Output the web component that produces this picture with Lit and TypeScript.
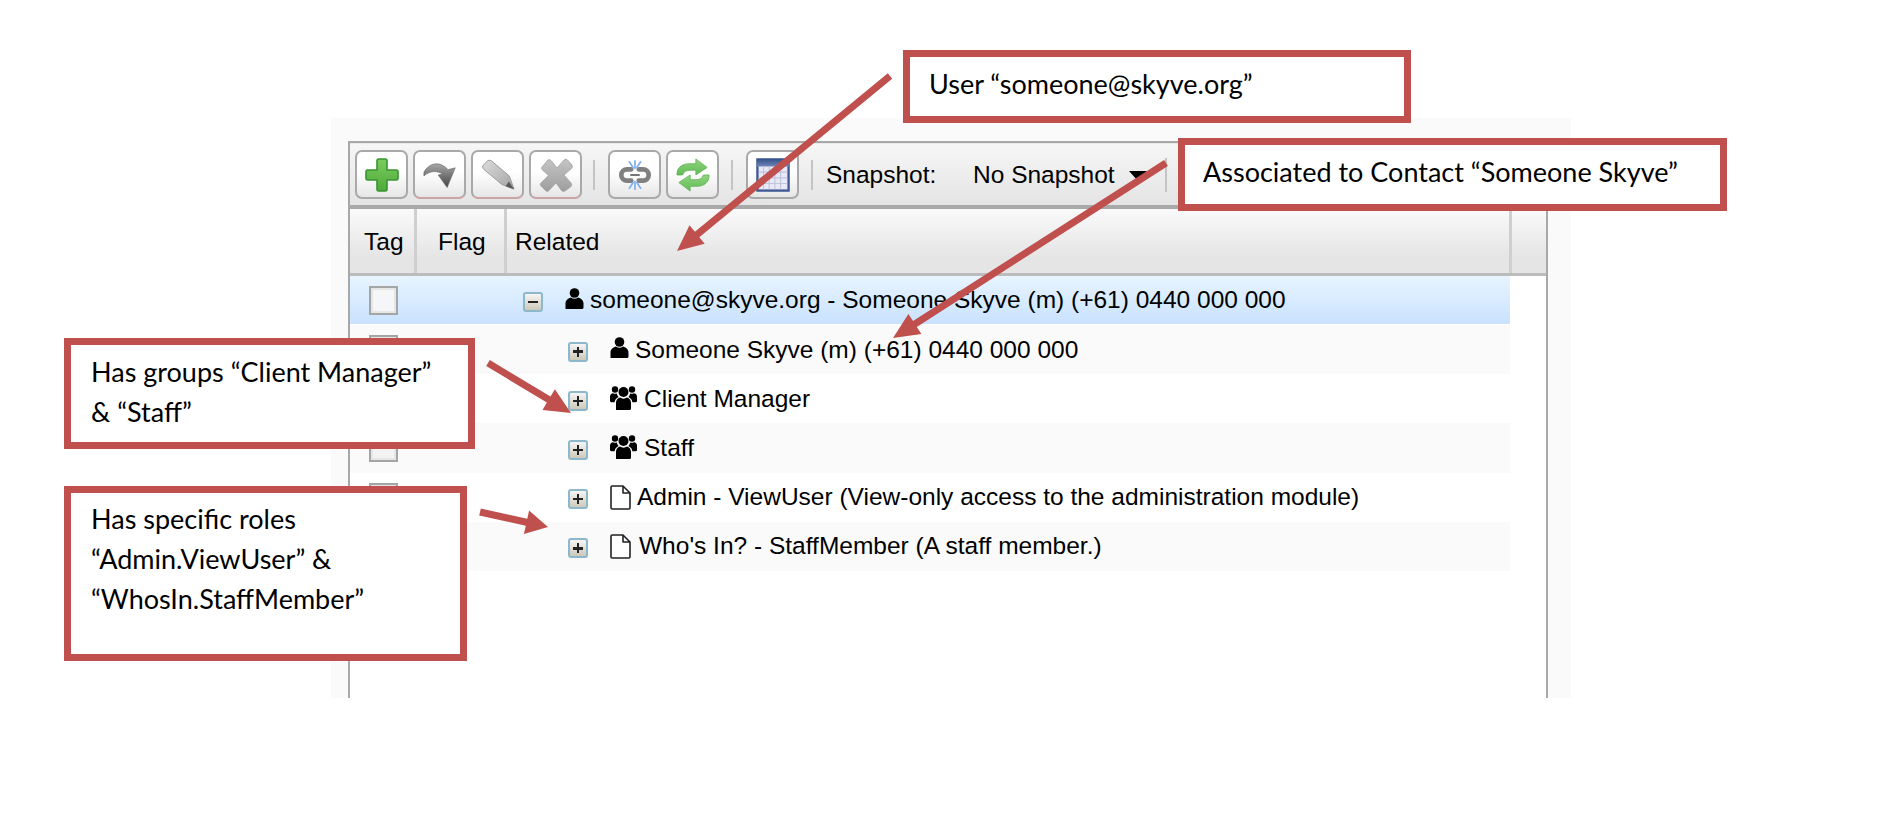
import { LitElement, html, css, svg } from "lit";
import { customElement } from "lit/decorators.js";

type Row = { kind: "user" | "group" | "doc"; text: string; cls: string; open?: boolean };

const rows: Row[] = [
  { kind: "user", text: "someone@skyve.org - Someone Skyve (m) (+61) 0440 000 000", cls: "sel top", open: true },
  { kind: "user", text: "Someone Skyve (m) (+61) 0440 000 000", cls: "alt" },
  { kind: "group", text: "Client Manager", cls: "" },
  { kind: "group", text: "Staff", cls: "alt" },
  { kind: "doc", text: "Admin - ViewUser (View-only access to the administration module)", cls: "" },
  { kind: "doc", text: "Who's In? - StaffMember (A staff member.)", cls: "alt who" },
];

const userIcon = html`<svg class="ic user" viewBox="0 0 19 21"><circle cx="9.5" cy="5" r="4.8" fill="#000"/><path d="M0.5 21V15.5C0.5 12 3.5 10 6 9.5C8 11.2 11 11.2 13 9.5C15.5 10 18.5 12 18.5 15.5V19.5C18.5 20.5 17.5 21 16.5 21Z" fill="#000"/></svg>`;
const groupIcon = html`<svg class="ic group" viewBox="0 0 27 24"><g fill="#000"><circle cx="13.5" cy="6" r="5"/><path d="M6 24V17C6 13.5 8.5 11.8 10 11.5C12 13 15 13 17 11.5C18.5 11.8 21 13.5 21 17V22.5C21 23.5 20 24 19 24Z"/><circle cx="5" cy="3.5" r="3.2"/><circle cx="22" cy="3.5" r="3.2"/><path d="M0 15V10.5C0 8.5 1.5 7.5 3 7.2C4.2 8 5.5 8 7 7.6C7 9 7.8 10.3 8.6 11C6.5 12 4.8 13.8 4.6 16.2H1.5C0.6 16.2 0 15.8 0 15Z"/><path d="M27 15V10.5C27 8.5 25.5 7.5 24 7.2C22.8 8 21.5 8 20 7.6C20 9 19.2 10.3 18.4 11C20.5 12 22.2 13.8 22.4 16.2H25.5C26.4 16.2 27 15.8 27 15Z"/></g></svg>`;
const docIcon = html`<svg class="ic doc" viewBox="0 0 21 25"><path d="M1 2.2C1 1.5 1.5 1 2.2 1H13L20 8V22.8C20 23.5 19.5 24 18.8 24H2.2C1.5 24 1 23.5 1 22.8Z M13 1V8H20" fill="#fff" stroke="#222" stroke-width="1.6" stroke-linejoin="round"/></svg>`;

const toolIcons = {
  plus: html`<svg class="tool" viewBox="0 0 34 34"><path d="M12 2.5Q12 1 13.5 1H20.5Q22 1 22 2.5V12H31.5Q33 12 33 13.5V20.5Q33 22 31.5 22H22V31.5Q22 33 20.5 33H13.5Q12 33 12 31.5V22H2.5Q1 22 1 20.5V13.5Q1 12 2.5 12H12Z" fill="url(#gPlus)" stroke="#3a9431" stroke-width="1.6"/></svg>`,
  redo: html`<svg class="tool" viewBox="0 0 38 34"><path d="M1 14L1 18C8 12 16 12 22 16L17 17L27 31L36 9L28 11C19 1 7 3 1 14Z" fill="url(#gGrey)" stroke="#666" stroke-width=".7" stroke-linejoin="round"/></svg>`,
  pencil: html`<svg class="tool" viewBox="0 0 36 34"><path d="M2 7L7 2Q9 .5 11 2L30 18L35 32L22 27L3 11Q1 9 2 7Z" fill="url(#gLight)" stroke="#999" stroke-width="1"/><path d="M29.500 24L35 32L26 29Z" fill="#5a5a5a"/></svg>`,
  cross: html`<svg class="tool" viewBox="0 0 34 34"><path d="M3 9L9 2Q10.500 1 12 2.500L18 10L25 2Q27 .5 28.500 2L33 7Q34 9 32.500 10.500L25 17L32 25Q33.500 27 32 28.500L26 33Q24 34 22.500 32.500L17 25L10 32.500Q8.500 34 7 33L2 28Q.5 26.500 2 25L9.500 17.500L3 11.500Q2 10 3 9Z" fill="url(#gGrey2)" stroke="#a0a0a0" stroke-width=".8"/></svg>`,
  link: html`<svg class="tool" viewBox="0 0 36 34"><g fill="none" stroke="#808080" stroke-width="5" stroke-linecap="round"><path d="M14 11H9.500A6 6 0 0 0 9.500 23H14"/><path d="M22 11H26.500A6 6 0 0 1 26.500 23H22"/></g><path d="M13 17H23" stroke="#4a4a4a" stroke-width="1.600"/><g stroke="#7fb0ee" stroke-width="1.800" stroke-linecap="round"><path d="M18 2V10M18 24V32M12 3L16 9M24 3L20 9M12 31L16 25M24 31L20 25"/></g></svg>`,
  sync: html`<svg class="tool" viewBox="0 0 36 34"><path d="M1 16C1 8 8 5 14 5H21V0L33 9L21 17V12H15C11 12 8 13.500 7 17H1Z" fill="url(#gSync)" stroke="#5cb052" stroke-width=".8"/><path d="M35 18C35 26 28 29 22 29H15V34L3 25L15 17V22H21C25 22 28 20.500 29 17H35Z" fill="url(#gSync)" stroke="#5cb052" stroke-width=".8"/></svg>`,
  cal: html`<svg class="tool" viewBox="0 0 36 36"><rect x="1.500" y="1.500" width="33" height="33" fill="#e9e9f6" stroke="#3f5a92" stroke-width="2.500"/><rect x="1" y="1" width="34" height="8" fill="url(#gCal)"/><g stroke="#c2c4de" stroke-width="1.200"><path d="M8 9V33M14 9V33M20 9V33M26 9V33M3 15H33M3 21H33M3 27H33"/></g></svg>`,
};

const defs = html`<svg class="defs" width="0" height="0"><defs>
  <linearGradient id="gPlus" x1="0" y1="0" x2="0" y2="1"><stop offset="0" stop-color="#7ccc5f"/><stop offset="1" stop-color="#4daa3a"/></linearGradient>
  <linearGradient id="gGrey" x1="0" y1="0" x2="0" y2="1"><stop offset="0" stop-color="#a8a8a8"/><stop offset=".45" stop-color="#7a7a7a"/><stop offset="1" stop-color="#444"/></linearGradient>
  <linearGradient id="gLight" x1="0" y1="0" x2="1" y2="1"><stop offset="0" stop-color="#dcdcdc"/><stop offset="1" stop-color="#a2a2a2"/></linearGradient>
  <linearGradient id="gGrey2" x1="0" y1="0" x2="0" y2="1"><stop offset="0" stop-color="#c4c4c4"/><stop offset="1" stop-color="#9e9e9e"/></linearGradient>
  <linearGradient id="gSync" x1="0" y1="0" x2="0" y2="1"><stop offset="0" stop-color="#8fd67e"/><stop offset="1" stop-color="#62ba56"/></linearGradient>
  <linearGradient id="gCal" x1="0" y1="0" x2="0" y2="1"><stop offset="0" stop-color="#35508c"/><stop offset="1" stop-color="#6f86b8"/></linearGradient>
</defs></svg>`;

function arrow(x1: number, y1: number, x2: number, y2: number, w: number, hl: number, hw: number) {
  const dx = x2 - x1, dy = y2 - y1, l = Math.hypot(dx, dy), ux = dx / l, uy = dy / l, nx = -uy, ny = ux;
  const bx = x2 - ux * hl, by = y2 - uy * hl;
  const p = [
    [x1 + nx * w / 2, y1 + ny * w / 2], [bx + nx * w / 2, by + ny * w / 2], [bx + nx * hw / 2, by + ny * hw / 2],
    [x2, y2], [bx - nx * hw / 2, by - ny * hw / 2], [bx - nx * w / 2, by - ny * w / 2], [x1 - nx * w / 2, y1 - ny * w / 2],
  ].map((q) => q.map((n) => n.toFixed(1)).join(",")).join(" ");
  return svg`<polygon points=${p} fill="#c0504d"/>`;
}

@customElement("app-root")
export class AppRoot extends LitElement {
  static styles = css`
    :host { display: block; position: relative; width: 1903px; height: 819px; background: #fff; overflow: hidden; font-family: "Liberation Sans", Arial, sans-serif; color: #000; }
    .defs { position: absolute; }
    .page { padding: 118px 0 0 331px; }
    .backdrop { box-sizing: border-box; width: 1240px; height: 580px; background: #fafafa; padding: 23px 23px 0 17px; }
    .grid { box-sizing: border-box; height: 100%; background: #fff; border: 2px solid #a8a8a8; border-bottom: 0; display: flex; flex-direction: column; }
    .toolbar { box-sizing: border-box; height: 66px; flex: none; display: flex; align-items: center; padding: 0 0 0 5px; background: linear-gradient(#f6f6f6, #e4e4e4); border-bottom: 4px solid #a9a9a9; border-top: 1px solid #e8e8e8; font-size: 24.5px; }
    .btn { box-sizing: border-box; width: 53px; height: 49px; flex: none; margin-right: 5px; border: 2px solid #a9a9a9; border-radius: 7px; background: linear-gradient(#fff 45%, #e6e6e6); display: flex; align-items: center; justify-content: center; }
    .btn.off { border-bottom-color: #c9a5a5; }
    .tool { display: block; width: 34px; height: 34px; filter: blur(0.5px); }
    .sep { width: 2px; height: 30px; flex: none; background: #c4c4c4; margin: 0 13px 0 7px; }
    .sep.first { margin-left: 6px; }
    .snap-label { width: 147px; flex: none; white-space: nowrap; }
    .snap-val { white-space: nowrap; }
    .caret { width: 0; height: 0; border: 9px solid transparent; border-top: 10px solid #000; border-bottom: 0; margin: 3px 0 0 14px; flex: none; }
    .toolbar .sep.last { margin-left: 18px; height: 34px; }
    .head { display: flex; height: 67px; flex: none; box-sizing: border-box; border-bottom: 3px solid #bcbcbc; background: linear-gradient(#fafafa, #e5e5e5 75%); font-size: 24.5px; }
    .hc { box-sizing: border-box; border-right: 3px solid #cfcfcf; display: flex; align-items: center; padding-top: 2px; }
    .hc.tag { width: 67px; padding-left: 14px; }
    .hc.flag { width: 90px; padding-left: 21px; }
    .hc.rel { width: 1005px; padding-left: 8px; }
    .hc.end { flex: 1; border-right: 0; }
    .rows { width: 1160px; font-size: 24.5px; }
    .row { height: 49.2px; display: flex; align-items: center; box-sizing: border-box; white-space: nowrap; }
    .row.alt { background: #fafafa; }
    .row.sel { background: linear-gradient(#e8f4ff, #c9e2ff); height: 48px; margin-bottom: 1px; }
    .cb { box-sizing: border-box; width: 29px; height: 29px; margin: 0 0 0 19px; flex: none; border: 2px solid #a5a5a5; background: #f3f3f3; box-shadow: inset 0 0 0 2px #e6e6e6; }
    .sel .cb { background: #f4f6f8; }
    .tree { margin-left: 170px; flex: none; box-sizing: border-box; width: 20px; height: 20px; border: 2px solid #8db8cb; border-radius: 3px; background: linear-gradient(#f5f5f5, #cdc9ba); position: relative; top: 2px; display: flex; align-items: center; justify-content: center; }
    .top .tree { margin-left: 125px; }
    .tree i { display: block; width: 10px; height: 2.5px; background: #222; position: relative; }
    .tree i.plus::after { content: ""; position: absolute; left: 3.75px; top: -3.75px; width: 2.5px; height: 10px; background: #222; }
    .ic { display: block; flex: none; margin-left: 22px; margin-right: 6px; }
    .ic.user { width: 19px; height: 21px; position: relative; top: -2px; }
    .ic.group { width: 27px; height: 24px; margin-right: 7px; position: relative; top: -1px; }
    .ic.doc { width: 21px; height: 25px; }
    .who .ic.doc { margin-right: 8px; }
    .callout { position: absolute; box-sizing: border-box; background: #fff; border: 7px solid #c0504d; font-family: Lato, "Open Sans", sans-serif; font-size: 27px; line-height: 40px; padding-left: 20px; white-space: nowrap; }
    .c1 { left: 903px; top: 50px; width: 508px; height: 73px; padding-top: 7px; padding-left: 19px; }
    .c2 { left: 1178px; top: 138px; width: 549px; height: 73px; padding-top: 7px; padding-left: 18px; }
    .c3 { left: 64px; top: 338px; width: 411px; height: 111px; padding-top: 7px; }
    .c4 { left: 64px; top: 486px; width: 403px; height: 175px; padding-top: 6px; }
    .arrows { position: absolute; left: 0; top: 0; width: 1903px; height: 819px; pointer-events: none; }
  `;

  render() {
    return html`
      ${defs}
      <div class="page"><div class="backdrop"><div class="grid">
        <div class="toolbar">
          <div class="btn">${toolIcons.plus}</div>
          <div class="btn off">${toolIcons.redo}</div>
          <div class="btn off">${toolIcons.pencil}</div>
          <div class="btn off">${toolIcons.cross}</div>
          <div class="sep first"></div>
          <div class="btn">${toolIcons.link}</div>
          <div class="btn">${toolIcons.sync}</div>
          <div class="sep"></div>
          <div class="btn">${toolIcons.cal}</div>
          <div class="sep"></div>
          <div class="snap-label">Snapshot:</div>
          <div class="snap-val">No Snapshot</div>
          <div class="caret"></div>
          <div class="sep last"></div>
        </div>
        <div class="head">
          <div class="hc tag">Tag</div>
          <div class="hc flag">Flag</div>
          <div class="hc rel">Related</div>
          <div class="hc end"></div>
        </div>
        <div class="rows">
          ${rows.map((r) => html`<div class="row ${r.cls}">
            <div class="cb"></div>
            <div class="tree"><i class=${r.open ? "" : "plus"}></i></div>
            ${r.kind === "user" ? userIcon : r.kind === "group" ? groupIcon : docIcon}
            <span>${r.text}</span>
          </div>`)}
        </div>
      </div></div></div>
      <svg class="arrows" viewBox="0 0 1903 819">
        ${arrow(890, 76, 677, 251, 7, 26, 24)}
        ${arrow(1166, 163, 893, 338, 7, 26, 24)}
        ${arrow(488, 363, 571, 413, 7, 26, 24)}
        ${arrow(480, 512, 548, 527, 7, 22, 24)}
      </svg>
      <div class="callout c1">User “someone@skyve.org”</div>
      <div class="callout c2">Associated to Contact “Someone Skyve”</div>
      <div class="callout c3">Has groups “Client Manager”<br />&amp; “Staff”</div>
      <div class="callout c4">Has specific roles<br />“Admin.ViewUser” &amp;<br />“WhosIn.StaffMember”</div>
    `;
  }
}
